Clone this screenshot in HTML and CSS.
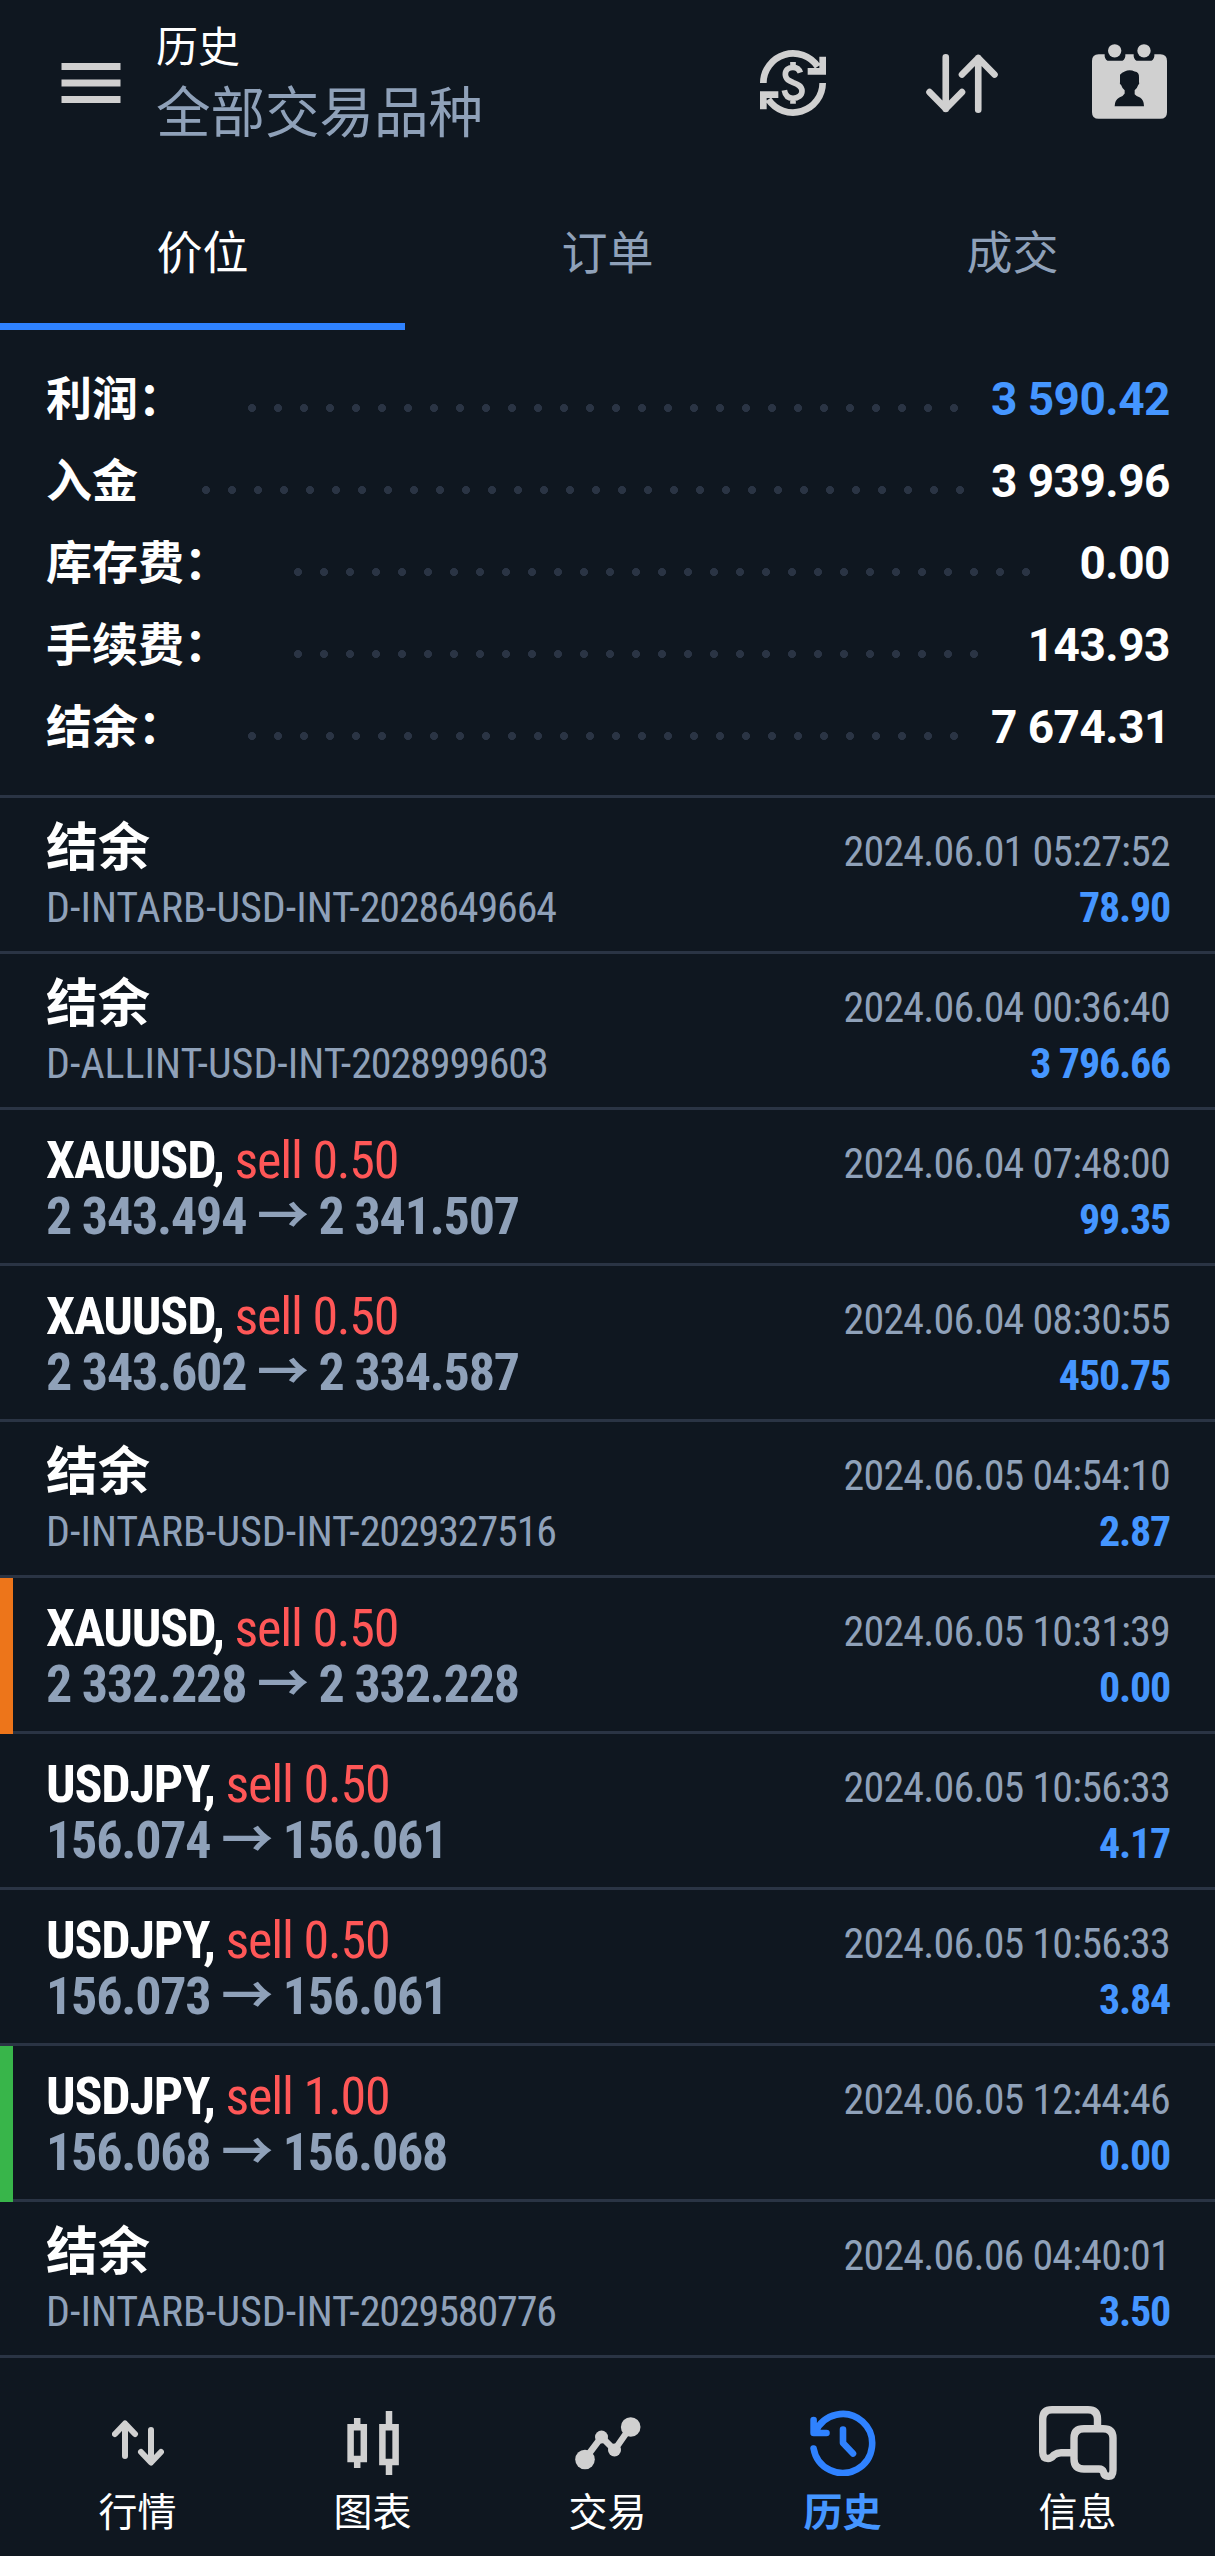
FILE: index.html
```html
<!DOCTYPE html>
<html lang="zh-CN">
<head>
    <meta charset="UTF-8">
    <meta name="viewport" content="width=device-width, initial-scale=1.0">
    <title>历史</title>
    <link rel="stylesheet" href="styles.css">
</head>
<body>

    <!-- Header -->
    <header class="header">
        <svg class="icon menu-icon" width="60" height="40" viewBox="0 0 60 40">
            <path d="M0.5 3.5H59.5M0.5 20H59.5M0.5 36.5H59.5" stroke-width="7"/>
        </svg>
        <div class="header-title">
            <h1>历史</h1>
            <p>全部交易品种</p>
        </div>
        <div class="header-actions">
            <svg class="icon currency-icon" width="66" height="66" viewBox="0 0 198 198" stroke-width="20">
                <path d="M10 99A89 89 0 0 1 173 50M188 20V64H143"/>
                <path d="M10 99A89 89 0 0 1 173 50M188 20V64H143" transform="rotate(180 99 99)"/>
                <path d="M121 68C117 56 108 52 99 52C86 52 76 60 76 73C76 88 88 93 100 98C113 103 126 108 126 123C126 136 114 145 99 145C86 145 76 138 73 121M99 36V54M99 144V161" stroke-width="17"/>
            </svg>
            <svg class="icon round" width="72" height="59" viewBox="0 0 216 178" stroke-width="20">
                <path d="M59 10V166M10 115L59 165L108 115M157 168V12M108 62L157 12L206 62"/>
            </svg>
            <svg class="icon calendar-icon" width="75" height="75" viewBox="0 0 225 224">
                <path class="fill" d="M20 30H38V36Q40 50 52 50H86Q98 50 100 36V30H125V36Q127 50 139 50H173Q185 50 187 36V30H205Q225 30 225 50V204Q225 224 205 224H20Q0 224 0 204V50Q0 30 20 30Z"/>
                <circle class="fill" cx="68" cy="20" r="20"/>
                <circle class="fill" cx="156" cy="20" r="20"/>
                <path class="cutout" d="M84 92Q90 84 98 82Q113 74 128 82Q142 84 141 100V112Q143 120 139 122Q136 132 128 138V150Q132 156 144 160Q156 168 156 186H68Q68 168 82 160Q94 156 98 148V138Q90 132 87 122Q82 120 84 112Z"/>
            </svg>
        </div>
    </header>

    <!-- Tabs -->
    <nav class="tabs">
        <div class="tab active">价位</div>
        <div class="tab">订单</div>
        <div class="tab">成交</div>
    </nav>

    <!-- Summary -->
    <section class="summary">
        <div class="summary-row">
            <span>利润：</span><i class="dots" style="--dots: 28"></i><span class="value profit">3 590.42</span>
        </div>
        <div class="summary-row">
            <span>入金</span><i class="dots" style="--dots: 30"></i><span class="value">3 939.96</span>
        </div>
        <div class="summary-row">
            <span>库存费：</span><i class="dots" style="--dots: 29"></i><span class="value">0.00</span>
        </div>
        <div class="summary-row">
            <span>手续费：</span><i class="dots" style="--dots: 27"></i><span class="value">143.93</span>
        </div>
        <div class="summary-row">
            <span>结余：</span><i class="dots" style="--dots: 28"></i><span class="value">7 674.31</span>
        </div>
    </section>

    <!-- History list -->
    <main class="history">
        <div class="deal">
            <div class="line"><b class="name">结余</b><span class="date">2024.06.01 05:27:52</span></div>
            <div class="line"><span class="comment">D-INTARB-USD-INT-<span class="num">2028649664</span></span><b class="amount">78.90</b></div>
        </div>
        <div class="deal">
            <div class="line"><b class="name">结余</b><span class="date">2024.06.04 00:36:40</span></div>
            <div class="line"><span class="comment">D-ALLINT-USD-INT-<span class="num">2028999603</span></span><b class="amount">3 796.66</b></div>
        </div>
        <div class="deal">
            <div class="line"><span class="name"><b>XAUUSD,</b> <span class="sell">sell 0.50</span></span><span class="date">2024.06.04 07:48:00</span></div>
            <div class="line"><b class="price">2 343.494 → 2 341.507</b><b class="amount">99.35</b></div>
        </div>
        <div class="deal">
            <div class="line"><span class="name"><b>XAUUSD,</b> <span class="sell">sell 0.50</span></span><span class="date">2024.06.04 08:30:55</span></div>
            <div class="line"><b class="price">2 343.602 → 2 334.587</b><b class="amount">450.75</b></div>
        </div>
        <div class="deal">
            <div class="line"><b class="name">结余</b><span class="date">2024.06.05 04:54:10</span></div>
            <div class="line"><span class="comment">D-INTARB-USD-INT-<span class="num">2029327516</span></span><b class="amount">2.87</b></div>
        </div>
        <div class="deal stop-loss">
            <div class="line"><span class="name"><b>XAUUSD,</b> <span class="sell">sell 0.50</span></span><span class="date">2024.06.05 10:31:39</span></div>
            <div class="line"><b class="price">2 332.228 → 2 332.228</b><b class="amount">0.00</b></div>
        </div>
        <div class="deal">
            <div class="line"><span class="name"><b>USDJPY,</b> <span class="sell">sell 0.50</span></span><span class="date">2024.06.05 10:56:33</span></div>
            <div class="line"><b class="price">156.074 → 156.061</b><b class="amount">4.17</b></div>
        </div>
        <div class="deal">
            <div class="line"><span class="name"><b>USDJPY,</b> <span class="sell">sell 0.50</span></span><span class="date">2024.06.05 10:56:33</span></div>
            <div class="line"><b class="price">156.073 → 156.061</b><b class="amount">3.84</b></div>
        </div>
        <div class="deal take-profit">
            <div class="line"><span class="name"><b>USDJPY,</b> <span class="sell">sell 1.00</span></span><span class="date">2024.06.05 12:44:46</span></div>
            <div class="line"><b class="price">156.068 → 156.068</b><b class="amount">0.00</b></div>
        </div>
        <div class="deal">
            <div class="line"><b class="name">结余</b><span class="date">2024.06.06 04:40:01</span></div>
            <div class="line"><span class="comment">D-INTARB-USD-INT-<span class="num">2029580776</span></span><b class="amount">3.50</b></div>
        </div>
    </main>

    <!-- Bottom navigation -->
    <nav class="bottom-nav">
        <div class="nav-item">
            <div class="nav-icon">
                <svg class="icon round" width="52" height="46" viewBox="0 0 52 46" stroke-width="6">
                    <path d="M13 36V4M3 14L13 3.5L23 14M39 10V42M29 32L39 42.5L49 32"/>
                </svg>
            </div>
            <span>行情</span>
        </div>
        <div class="nav-item">
            <div class="nav-icon">
                <svg class="icon" width="52" height="64" viewBox="0 0 52 64" stroke-width="6.5">
                    <path d="M3.6 16.2H16.8V48H3.6ZM10.2 7V14M10.2 50V57M35.4 16.2H48.6V51H35.4ZM42 0V14M42 53V64"/>
                </svg>
            </div>
            <span>图表</span>
        </div>
        <div class="nav-item">
            <div class="nav-icon">
                <svg class="icon" width="66" height="53" viewBox="0 0 66 53" stroke-width="6.5">
                    <path d="M10 42L26.5 20L39.5 33L55.5 10"/>
                    <circle class="fill" cx="10" cy="42.5" r="9.8"/>
                    <circle class="fill" cx="26.5" cy="20" r="6.5"/>
                    <circle class="fill" cx="39.5" cy="33" r="6.5"/>
                    <circle class="fill" cx="55.7" cy="10" r="9.8"/>
                </svg>
            </div>
            <span>交易</span>
        </div>
        <div class="nav-item active">
            <div class="nav-icon">
                <svg class="icon round" width="66" height="66" viewBox="0 0 66 66" stroke-width="6.6">
                    <path d="M3.6 38.5A29.5 29.5 0 1 0 5.5 22M3.6 10V23H16.5M33 19.5V33L43 43.5"/>
                </svg>
            </div>
            <span>历史</span>
        </div>
        <div class="nav-item">
            <div class="nav-icon">
                <svg class="icon" width="78" height="74" viewBox="0 0 78 74" stroke-width="7.4">
                    <path d="M45 22.7H64Q74 22.7 74 32V64Q74 70.3 69.5 70.3Q65 70.3 64.5 66Q63.5 63 60 63H45Q35 63 35 53V32Q35 22.7 45 22.7Z"/>
                    <path d="M58.5 20V13Q58.5 3.7 49 3.7H13Q3.7 3.7 3.7 13V46Q3.7 52.5 9 52.5Q12 52.5 15 49Q18 46.7 22 46.7H33"/>
                </svg>
            </div>
            <span>信息</span>
        </div>
    </nav>

</body>
</html>
```
FILE: styles.css
```css
* {
    box-sizing: border-box;
}

body {
    margin: 0;
    background-color: #0f1720;
    color: #fff;
    font-family: Roboto, "Noto Sans CJK SC", sans-serif;
}

h1, p {
    margin: 0;
    font-weight: 400;
}

/* Icons */
.icon {
    display: block;
    fill: none;
    stroke: #d0d0d0;
}

.icon.round {
    stroke-linecap: round;
    stroke-linejoin: round;
}

.icon .fill {
    fill: #d0d0d0;
    stroke: none;
}

.icon .cutout {
    fill: #0f1720;
    stroke: none;
}

/* Header */
.header {
    display: flex;
    align-items: center;
    height: 166px;
    padding: 0 48px 0 61px;
}

.header-title {
    margin-left: 35px;
    padding-top: 18px;
    height: 166px;
}

.header-title h1 {
    font-size: 42px;
    line-height: 60px;
}

.header-title p {
    font-size: 54.5px;
    line-height: 66px;
    margin-top: 2px;
    color: #8fa1b9;
}

.header-actions {
    display: flex;
    align-items: center;
    gap: 94px;
    margin-left: auto;
}

.currency-icon {
    margin-right: 6px;
}

.calendar-icon {
    margin-bottom: 3px;
}

/* Tabs */
.tabs {
    display: flex;
    height: 164px;
}

.tab {
    flex: 1;
    text-align: center;
    font-size: 46px;
    line-height: 174px;
    color: #8fa1b9;
    border-bottom: 7px solid transparent;
}

.tab.active {
    color: #fff;
    border-bottom-color: #2f82ff;
}

/* Summary */
.summary {
    height: 468px;
    padding: 28px 45px 0 46px;
    border-bottom: 3px solid #2a3444;
    font-size: 46px;
    font-weight: 700;
}

.summary-row {
    display: flex;
    line-height: 82px;
}

.summary-row .value {
    margin-left: auto;
    letter-spacing: -0.5px;
}

.dots {
    width: calc(var(--dots) * 26px);
    height: 8px;
    margin: 46px 0 0 55px;
    background: radial-gradient(circle, #2a3444 3.7px, transparent 4.3px) 0 0 / 26px 8px;
}

.profit {
    color: #4596ff;
}

/* History list */
.deal {
    position: relative;
    height: 156px;
    padding: 23px 45px 0 46px;
    border-bottom: 3px solid #2a3444;
    font-family: "Roboto Condensed", Roboto, "Noto Sans CJK SC", sans-serif;
    font-stretch: 75%;
}

/* coloured edge, also covers the row divider */
.deal.stop-loss::before,
.deal.take-profit::before {
    content: "";
    position: absolute;
    top: 0;
    left: 0;
    width: 13px;
    height: 156px;
}

.deal.stop-loss::before {
    background-color: #ed751a;
}

.deal.take-profit::before {
    background-color: #38b54a;
}

.line {
    display: flex;
    justify-content: space-between;
    align-items: baseline;
    height: 56px;
    line-height: 56px;
    white-space: nowrap;
}

.name, .price {
    font-size: 52px;
    letter-spacing: -1.2px;
}

b.name {
    letter-spacing: 0;
}

.date, .comment, .amount {
    font-size: 42px;
    line-height: 62px;
}

.date {
    letter-spacing: -0.8px;
}

.amount {
    letter-spacing: -1.2px;
}

.num {
    letter-spacing: -1.1px;
}

.date, .comment, .price {
    color: #8fa1b9;
}

.sell {
    color: #ff5757;
}

.amount {
    color: #4596ff;
}

/* Bottom navigation */
.bottom-nav {
    display: flex;
    height: 198px;
    padding: 0 20px;
}

.nav-item {
    flex: 1;
    display: flex;
    flex-direction: column;
    align-items: center;
    padding-top: 40px;
    font-size: 39px;
    line-height: 50px;
}

.nav-icon {
    display: flex;
    align-items: center;
    height: 90px;
}

.nav-item.active {
    color: #4596ff;
    font-weight: 700;
}

.nav-item.active .icon {
    stroke: #2f82ff;
}
```
